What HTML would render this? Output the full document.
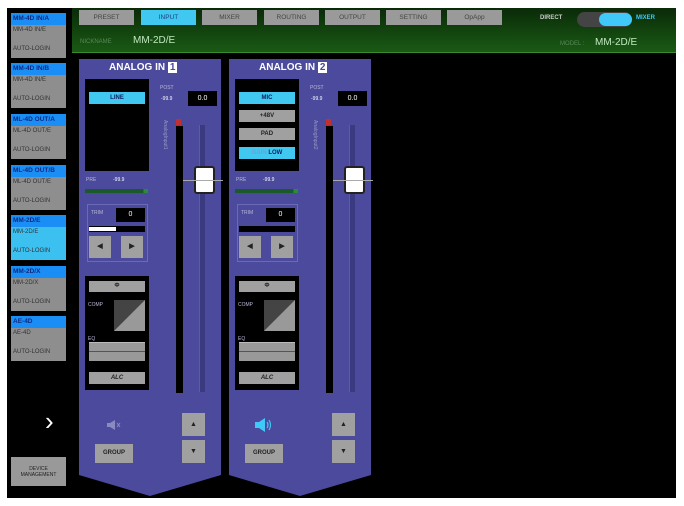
<!DOCTYPE html>
<html><head><meta charset="utf-8"><style>
*{margin:0;padding:0;box-sizing:border-box}
body{width:684px;height:506px;background:#fff;position:relative;overflow:hidden;font-family:"Liberation Sans",sans-serif}
.a{position:absolute}
.scr{left:7px;top:8px;width:669px;height:490px;background:#000}
.card{position:absolute;left:11px;width:55px;height:45px;background:#8e8e8e;font-size:5px;color:#333}
.card .h{height:12px;background:#1a8ef5;color:#102a80;font-weight:bold;padding:2px 2px;font-size:6.5px}
.card .l1{padding:2px 2px 0;font-size:6px}
.card .l2{position:absolute;top:33px;left:2px;font-size:6px}
.card.sel{background:#3cc0f0}
.tab{position:absolute;top:10px;height:15px;width:55px;background:#9a9a9a;color:#444;font-size:6.5px;text-align:center;line-height:15px}
.strip{position:absolute;top:59px;width:142px;height:437px;background:#4b4a9c;clip-path:polygon(0 0,100% 0,100% 416px,50% 100%,0 416px)}
.btn{position:absolute;background:#a0a0a0;color:#222;font-size:6px;font-weight:bold;text-align:center}
.cy{background:#40c8f0;color:#102060}
.blk{position:absolute;background:#000}
.lbl{position:absolute;color:#b8b8d8;font-size:5px}
</style></head><body>
<div class="a scr"></div>
<div class="card" style="top:13px"><div class="h">MM-4D IN/A</div><div class="l1">MM-4D IN/E</div><div class="l2">AUTO-LOGIN</div></div>
<div class="card" style="top:63px"><div class="h">MM-4D IN/B</div><div class="l1">MM-4D IN/E</div><div class="l2">AUTO-LOGIN</div></div>
<div class="card" style="top:114px"><div class="h">ML-4D OUT/A</div><div class="l1">ML-4D OUT/E</div><div class="l2">AUTO-LOGIN</div></div>
<div class="card" style="top:165px"><div class="h">ML-4D OUT/B</div><div class="l1">ML-4D OUT/E</div><div class="l2">AUTO-LOGIN</div></div>
<div class="card sel" style="top:215px"><div class="h">MM-2D/E</div><div class="l1">MM-2D/E</div><div class="l2">AUTO-LOGIN</div></div>
<div class="card" style="top:266px"><div class="h">MM-2D/X</div><div class="l1">MM-2D/X</div><div class="l2">AUTO-LOGIN</div></div>
<div class="card" style="top:316px"><div class="h">AE-4D</div><div class="l1">AE-4D</div><div class="l2">AUTO-LOGIN</div></div>
<div class="a" style="left:45px;top:408px;color:#fff;font-size:26px;line-height:26px">&#8250;</div>
<div class="btn" style="left:11px;top:457px;width:55px;height:29px;font-size:5px;font-weight:normal;padding-top:9px;background:#999">DEVICE<br>MANAGEMENT</div>

<div class="a" style="left:72px;top:8px;width:604px;height:45px;background:linear-gradient(#0a2a08,#1a5a14);border-bottom:1px solid #3a8a30"></div>
<div class="tab" style="left:79px">PRESET</div>
<div class="tab" style="left:141px;background:#40c8f0;color:#204080">INPUT</div>
<div class="tab" style="left:202px">MIXER</div>
<div class="tab" style="left:264px">ROUTING</div>
<div class="tab" style="left:325px">OUTPUT</div>
<div class="tab" style="left:386px">SETTING</div>
<div class="tab" style="left:447px">OpApp</div>
<div class="a" style="left:80px;top:39px;color:#5a8a5a;font-size:6px">NICKNAME</div>
<div class="a" style="left:133px;top:35px;color:#c0e8c0;font-size:10px">MM-2D/E</div>
<div class="a" style="left:540px;top:15px;color:#ccc;font-size:6px;font-weight:bold">DIRECT</div>
<div class="a" style="left:577px;top:12px;width:55px;height:15px;border-radius:8px;background:#444"></div>
<div class="a" style="left:599px;top:13px;width:33px;height:13px;border-radius:7px;background:#40c8f8"></div>
<div class="a" style="left:636px;top:15px;color:#40c8f8;font-size:6px;font-weight:bold">MIXER</div>
<div class="a" style="left:560px;top:41px;color:#5a8a5a;font-size:6px">MODEL :</div>
<div class="a" style="left:595px;top:37px;color:#c0e8c0;font-size:10px">MM-2D/E</div>

<div class="strip" style="left:79px"></div>
<div class="strip" style="left:229px"></div>

<div id="s1"></div>
<script>
function strip(x,n,on){
 let h='';
 const A=(l,t,w,hh,st)=>'<div class="a" style="left:'+(x+l)+'px;top:'+t+'px;width:'+w+'px;height:'+hh+'px;'+(st||'')+'"></div>';
 h+=`<div class="a" style="left:${x+30}px;top:62px;color:#fff;font-size:10px;font-weight:bold">ANALOG IN <span style="background:#fff;color:#4b4a9c;padding:0 2px">${n}</span></div>`;
 h+=A(6,79,64,92,'background:#000');
 if(n==1){h+=`<div class="btn cy" style="left:${x+10}px;top:92px;width:56px;height:12px;line-height:12px">LINE</div>`;}
 else{
  h+=`<div class="btn cy" style="left:${x+10}px;top:92px;width:56px;height:12px;line-height:12px">MIC</div>`;
  h+=`<div class="btn" style="left:${x+10}px;top:110px;width:56px;height:12px;line-height:12px">+48V</div>`;
  h+=`<div class="btn" style="left:${x+10}px;top:128px;width:56px;height:12px;line-height:12px">PAD</div>`;
  h+=`<div class="btn cy" style="left:${x+10}px;top:147px;width:56px;height:12px;line-height:12px"><span style="color:#70a0d0">GAIN</span> LOW</div>`;
 }
 h+=`<div class="lbl" style="left:${x+81}px;top:85px">POST</div><div class="lbl" style="left:${x+82}px;top:96px;color:#fff">-99.9</div>`;
 h+=`<div class="blk" style="left:${x+109}px;top:91px;width:29px;height:15px;color:#fff;font-size:7px;text-align:center;line-height:15px">0.0</div>`;
 h+=`<div class="lbl" style="left:${x+83}px;top:120px;writing-mode:vertical-rl;color:#9a9ac8;font-size:5px">AnalogInput${n}</div>`;
 h+=A(97,119,5,6,'background:#c03030');
 h+=A(97,126,7,267,'background:#000');
 h+=A(120,125,6,267,'background:#3a3a80;border-left:1px solid #5a5ab0');
 h+=A(115,166,21,28,'background:#fff;border:2px solid #222;border-radius:3px');
 h+=A(104,180,40,1,'background:#aaa');
 h+=`<div class="lbl" style="left:${x+7}px;top:177px">PRE</div><div class="lbl" style="left:${x+34}px;top:177px;color:#fff">-99.9</div>`;
 h+=A(6,189,58,4,'background:#1a5a2a')+A(65,189,4,4,'background:#2a8a3a');
 h+=A(8,204,61,58,'border:1px solid #6a6ab8');
 h+=`<div class="lbl" style="left:${x+12}px;top:210px">TRIM</div>`;
 h+=`<div class="blk" style="left:${x+37}px;top:208px;width:29px;height:14px;color:#fff;font-size:7px;text-align:center;line-height:14px">0</div>`;
 h+=A(10,226,56,6,'background:#000');
 if(n==1)h+=A(10,227,27,4,'background:#fff');
 h+=`<div class="btn" style="left:${x+10}px;top:236px;width:22px;height:22px;line-height:22px;font-size:7px">&#9664;</div>`;
 h+=`<div class="btn" style="left:${x+42}px;top:236px;width:22px;height:22px;line-height:22px;font-size:7px">&#9654;</div>`;
 h+=A(6,276,64,114,'background:#000');
 h+=`<div class="btn" style="left:${x+10}px;top:281px;width:56px;height:11px;line-height:11px">&#934;</div>`;
 h+=`<div class="lbl" style="left:${x+9}px;top:302px">COMP</div>`;
 h+=`<svg class="a" style="left:${x+35}px;top:300px" width="31" height="31"><rect width="31" height="31" fill="#444"/><polygon points="31,0 31,31 0,31" fill="#999"/></svg>`;
 h+=`<div class="lbl" style="left:${x+9}px;top:336px">EQ</div>`;
 h+=A(10,342,56,19,'background:#999;border-top:1px solid #bbb');
 h+=A(10,351,56,1,'background:#555');
 h+=`<div class="btn" style="left:${x+10}px;top:372px;width:56px;height:12px;line-height:12px;font-style:italic">ALC</div>`;
 if(on){
  h+=`<svg class="a" style="left:${x+25}px;top:417px" width="18" height="16"><polygon points="1,5 5,5 11,1 11,15 5,11 1,11" fill="#40c8f8"/><path d="M13 5 Q15 8 13 11 M15 3 Q18 8 15 13" stroke="#40c8f8" fill="none" stroke-width="1.2"/></svg>`;
 } else {
  h+=`<svg class="a" style="left:${x+27}px;top:419px" width="16" height="12"><polygon points="1,4 4,4 9,1 9,11 4,8 1,8" fill="#8a8ac0"/><path d="M11 4 L14 8 M14 4 L11 8" stroke="#8a8ac0" stroke-width="1"/></svg>`;
 }
 h+=`<div class="btn" style="left:${x+16}px;top:444px;width:38px;height:19px;line-height:19px">GROUP</div>`;
 h+=`<div class="btn" style="left:${x+103}px;top:413px;width:23px;height:23px;line-height:23px;font-size:7px">&#9650;</div>`;
 h+=`<div class="btn" style="left:${x+103}px;top:440px;width:23px;height:23px;line-height:23px;font-size:7px">&#9660;</div>`;
 return h;
}
document.getElementById('s1').innerHTML=strip(79,1,false)+strip(229,2,true);
</script>
</body></html>
